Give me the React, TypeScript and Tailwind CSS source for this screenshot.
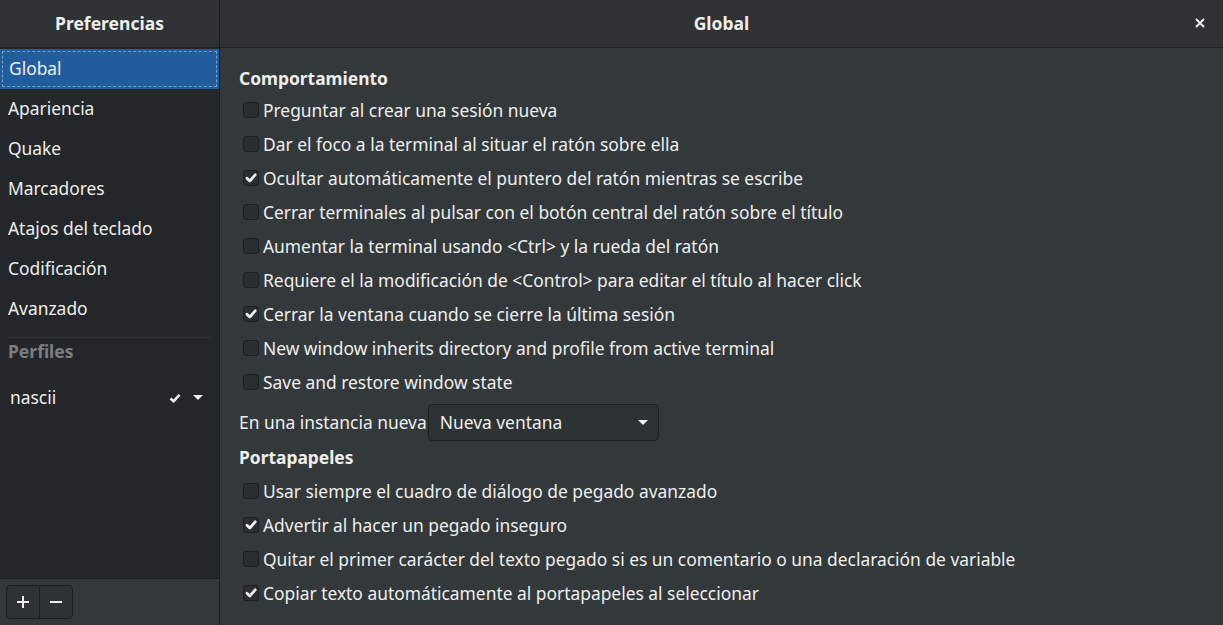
import React from "react";

const font = { fontFamily: '"Noto Sans", "Open Sans", sans-serif' };

function Check({ checked }: { checked: boolean }) {
  return (
    <span className="flex h-[16px] w-[16px] shrink-0 items-center justify-center rounded-[3px] border border-[#1b1f20] bg-[#2a2e30]">
      {checked && (
        <svg width="12" height="12" viewBox="0 0 12 12">
          <path d="M2 6.2 L4.8 9 L10.2 2.8" fill="none" stroke="#eeeeec" strokeWidth="2.8" strokeLinecap="round" strokeLinejoin="round" />
        </svg>
      )}
    </span>
  );
}

function Row({ label, checked = false }: { label: string; checked?: boolean }) {
  return (
    <div className="flex h-[34px] items-center gap-[4px] pl-[5px]">
      <Check checked={checked} />
      <span>{label}</span>
    </div>
  );
}

export default function App() {
  const side = ["Global", "Apariencia", "Quake", "Marcadores", "Atajos del teclado", "Codificación", "Avanzado"];
  return (
    <div className="flex h-[625px] w-[1223px] flex-col overflow-hidden bg-[#33393b] text-[17.4px] text-[#eeeeec]" style={font}>
      <div className="flex h-[48px] shrink-0 border-b border-[#1c1f20] bg-[#2e3234]">
        <div className="flex w-[220px] items-center justify-center border-r border-[#1c1f20] text-[17.5px] font-bold">Preferencias</div>
        <div className="relative flex flex-1 items-center justify-center text-[17.5px] font-bold">
          Global
          <span className="absolute right-[16px] top-[16px]">
            <svg width="14" height="14" viewBox="0 0 14 14">
              <path d="M3 3 L11 11 M11 3 L3 11" stroke="#eeeeec" strokeWidth="2" />
            </svg>
          </span>
        </div>
      </div>
      <div className="flex min-h-0 flex-1">
        <div className="flex w-[220px] shrink-0 flex-col border-r border-[#1c1f20] bg-[#33393b]">
          <div className="flex flex-1 flex-col bg-[#232729] pt-[1px]">
            {side.map((s, i) => (
              <div key={s} className={`flex h-[40px] items-center px-[8px] ${i === 0 ? "bg-[#215d9c]" : ""}`}>
                {i === 0 ? (
                  <div className="-mx-[6px] flex h-[36px] w-[calc(100%+12px)] items-center border border-dashed border-[#7a9ec4] px-[6px] pb-[2px]">{s}</div>
                ) : (
                  <span className="pb-[2px]">{s}</span>
                )}
              </div>
            ))}
            <div className="mx-[8px] mt-[8px] border-t border-[#2e3335]" />
            <div className="px-[8px] text-[17.5px] font-bold text-[#7b7f80]">Perfiles</div>
            <div className="mt-[22px] flex h-[24px] items-center pl-[10px] pr-[16px]">
              <span className="flex-1 pb-[2px]">nascii</span>
              <svg width="12" height="10" viewBox="0 0 12 10" className="mr-[12px]">
                <path d="M1.5 5.5 L4.5 8.3 L10.5 1.8" fill="none" stroke="#eeeeec" strokeWidth="2.6" strokeLinejoin="round" />
              </svg>
              <svg width="10" height="6" viewBox="0 0 10 6">
                <path d="M0 0 L10 0 L5 5 Z" fill="#eeeeec" />
              </svg>
            </div>
          </div>
          <div className="flex h-[47px] shrink-0 items-center border-t border-[#1c1f20] bg-[#33393b] px-[6px]">
            <div className="flex h-[34px] overflow-hidden rounded-[4px] border border-[#1b1f20] bg-[#2d3234]">
              <div className="flex w-[33px] items-center justify-center border-r border-[#1b1f20]">
                <svg width="12" height="12" viewBox="0 0 12 12"><path d="M6 0 V12 M0 6 H12" stroke="#eeeeec" strokeWidth="2" /></svg>
              </div>
              <div className="flex w-[32px] items-center justify-center">
                <svg width="12" height="12" viewBox="0 0 12 12"><path d="M0 6 H12" stroke="#eeeeec" strokeWidth="2" /></svg>
              </div>
            </div>
          </div>
        </div>
        <div className="flex-1 pl-[18px] pt-[17px]">
          <div className="mb-[4px] h-[24px] pl-[1px] font-bold">Comportamiento</div>
          <Row label="Preguntar al crear una sesión nueva" />
          <Row label="Dar el foco a la terminal al situar el ratón sobre ella" />
          <Row label="Ocultar automáticamente el puntero del ratón mientras se escribe" checked />
          <Row label="Cerrar terminales al pulsar con el botón central del ratón sobre el título" />
          <Row label="Aumentar la terminal usando <Ctrl> y la rueda del ratón" />
          <Row label="Requiere el la modificación de <Control> para editar el título al hacer click" />
          <Row label="Cerrar la ventana cuando se cierre la última sesión" checked />
          <Row label="New window inherits directory and profile from active terminal" />
          <Row label="Save and restore window state" />
          <div className="mt-[5px] flex items-center gap-[1px] pl-[1px]">
            <span>En una instancia nueva</span>
            <div className="flex h-[37px] w-[231px] items-center justify-between rounded-[4px] border border-[#1b1f20] bg-[#2d3234] pl-[11px] pr-[10px]">
              <span>Nueva ventana</span>
              <svg width="10" height="6" viewBox="0 0 10 6"><path d="M0 0 L10 0 L5 5 Z" fill="#eeeeec" /></svg>
            </div>
          </div>
          <div className="mb-[6px] mt-[3px] h-[24px] pl-[1px] font-bold">Portapapeles</div>
          <Row label="Usar siempre el cuadro de diálogo de pegado avanzado" />
          <Row label="Advertir al hacer un pegado inseguro" checked />
          <Row label="Quitar el primer carácter del texto pegado si es un comentario o una declaración de variable" />
          <Row label="Copiar texto automáticamente al portapapeles al seleccionar" checked />
        </div>
      </div>
    </div>
  );
}
